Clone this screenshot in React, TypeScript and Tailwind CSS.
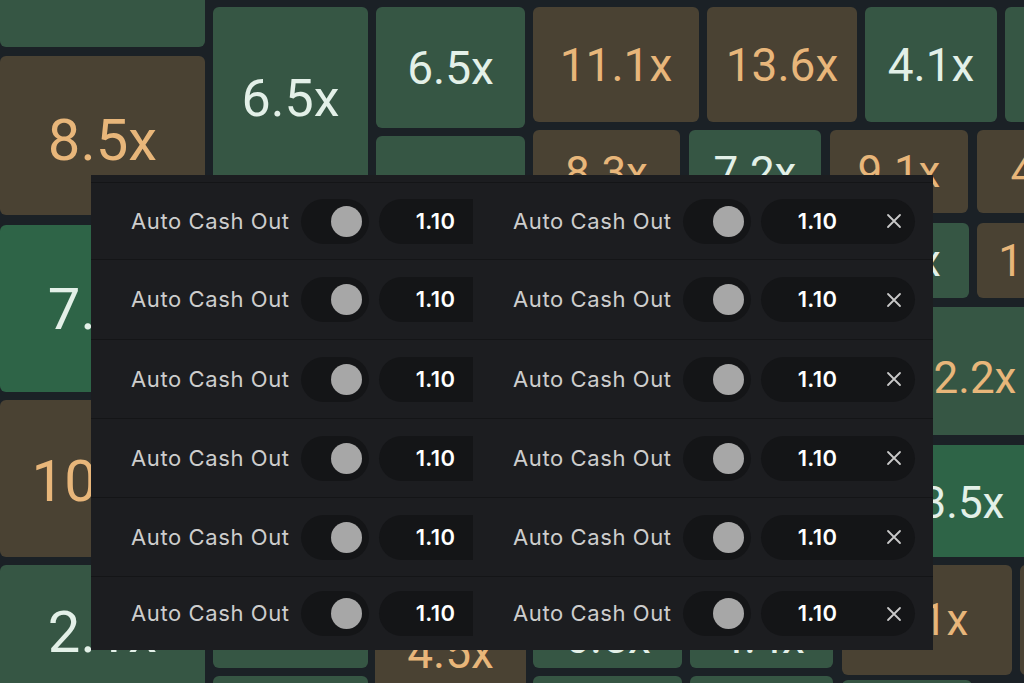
import React from 'react';

type Tile = {
  x: number;
  y: number;
  w: number;
  h: number;
  tone: 'green' | 'bright' | 'brown';
  label?: string;
  gold?: boolean;
  size?: number;
  dy?: number;
};

const tiles: Tile[] = [
  { x: 0, y: -20, w: 205, h: 67, tone: 'green' },
  { x: 0, y: 56, w: 205, h: 159, tone: 'brown', label: '8.5x', gold: true, size: 58, dy: 4 },
  { x: 213, y: 7, w: 155, h: 183, tone: 'green', label: '6.5x', size: 52 },
  { x: 376, y: 7, w: 149, h: 121, tone: 'green', label: '6.5x', size: 46 },
  { x: 376, y: 136, w: 149, h: 100, tone: 'green' },
  { x: 533, y: 7, w: 166, h: 115, tone: 'brown', label: '11.1x', gold: true, size: 46 },
  { x: 707, y: 7, w: 150, h: 115, tone: 'brown', label: '13.6x', gold: true, size: 46 },
  { x: 865, y: 7, w: 132, h: 115, tone: 'green', label: '4.1x', size: 46 },
  { x: 1005, y: 7, w: 60, h: 115, tone: 'green' },
  { x: 533, y: 130, w: 147, h: 85, tone: 'brown', label: '8.3x', gold: true, size: 44 },
  { x: 689, y: 130, w: 132, h: 85, tone: 'green', label: '7.2x', size: 44 },
  { x: 830, y: 130, w: 138, h: 83, tone: 'brown', label: '9.1x', gold: true, size: 44 },
  { x: 977, y: 130, w: 150, h: 83, tone: 'brown', label: '4.6x', gold: true, size: 44 },
  { x: 830, y: 223, w: 139, h: 75, tone: 'green', label: '6.1x', size: 44 },
  { x: 977, y: 223, w: 150, h: 75, tone: 'brown', label: '12.1x', gold: true, size: 44 },
  { x: 900, y: 307, w: 150, h: 128, tone: 'green', label: '2.2x', gold: true, size: 44, dy: 7 },
  { x: 874, y: 445, w: 178, h: 112, tone: 'bright', label: '3.5x', size: 44, dy: 2 },
  { x: 842, y: 565, w: 170, h: 110, tone: 'brown', label: '9.1x', gold: true, size: 44 },
  { x: 1020, y: 565, w: 40, h: 110, tone: 'brown' },
  { x: 0, y: 225, w: 205, h: 167, tone: 'bright', label: '7.4x', size: 58 },
  { x: 0, y: 400, w: 205, h: 157, tone: 'brown', label: '10.2x', gold: true, size: 58, dy: 2 },
  { x: 0, y: 565, w: 205, h: 134, tone: 'green', label: '2.1x', size: 58 },
  { x: 213, y: 560, w: 155, h: 108, tone: 'green' },
  { x: 375, y: 560, w: 151, h: 184, tone: 'brown', label: '4.5x', gold: true, size: 46 },
  { x: 533, y: 560, w: 149, h: 108, tone: 'green', label: '6.5x', size: 46, dy: 23 },
  { x: 690, y: 560, w: 143, h: 108, tone: 'green', label: '4.4x', size: 46, dy: 23 },
  { x: 213, y: 676, w: 155, h: 40, tone: 'green' },
  { x: 533, y: 676, w: 149, h: 40, tone: 'green' },
  { x: 690, y: 676, w: 143, h: 40, tone: 'green' },
  { x: 842, y: 680, w: 130, h: 40, tone: 'green' },
];

const toneClass = {
  green: 'bg-[#365644]',
  bright: 'bg-[#2e6447]',
  brown: 'bg-[#4a4233]',
};

const rowHeights = ['h-[77px]', 'h-[80px]', 'h-[79px]', 'h-[79px]', 'h-[79px]', 'h-[74px]'];

function CloseIcon() {
  return (
    <svg width="16" height="16" viewBox="0 0 16 16" fill="none">
      <path d="M2 2L14 14M14 2L2 14" stroke="#c9c9c9" strokeWidth="1.8" strokeLinecap="round" />
    </svg>
  );
}

function CashOutControl() {
  return (
    <div className="flex items-center">
      <span className="whitespace-nowrap text-[22px] text-[#cdcdcd] tracking-[0.6px]">Auto Cash Out</span>
      <div className="ml-[11px] flex h-[45px] w-[68px] shrink-0 items-center justify-end rounded-full bg-[#141517] pr-[7px]">
        <div className="h-[31px] w-[31px] rounded-full bg-[#a7a7a7]" />
      </div>
      <div className="ml-[10px] flex h-[45px] w-[154px] shrink-0 items-center justify-between rounded-full bg-[#141517] pl-[37px] pr-[13px]">
        <span className="text-[22px] font-semibold tracking-[0.4px] text-white">1.10</span>
        <CloseIcon />
      </div>
    </div>
  );
}

export default function App() {
  return (
    <div className="relative h-[683px] w-[1024px] overflow-hidden bg-[#1b2126] font-['Inter',sans-serif]">
      <div className="absolute inset-0">
        {tiles.map((t, i) => (
          <div
            key={i}
            className={'absolute flex items-center justify-center rounded-[6px] ' + toneClass[t.tone]}
            style={{ left: t.x, top: t.y, width: t.w, height: t.h }}
          >
            {t.label && (
              <span
                className={
                  "whitespace-nowrap font-['Roboto',sans-serif] leading-none " +
                  (t.gold ? 'text-[#e8b67a]' : 'text-[#e3f0e8]')
                }
                style={{ fontSize: t.size, transform: t.dy ? `translateY(${t.dy}px)` : undefined }}
              >
                {t.label}
              </span>
            )}
          </div>
        ))}
      </div>

      <div className="relative pl-[91px] pt-[175px]">
        <div className="w-[842px] bg-[#1c1d20] pt-[7px]">
          {rowHeights.map((h, i) => (
            <div key={i} className={'flex border-t border-[#141517] ' + h}>
              <div className="flex w-[382px] shrink-0 items-center overflow-hidden pl-[40px]">
                <CashOutControl />
              </div>
              <div className="flex flex-1 items-center pl-[40px]">
                <CashOutControl />
              </div>
            </div>
          ))}
        </div>
      </div>
    </div>
  );
}
